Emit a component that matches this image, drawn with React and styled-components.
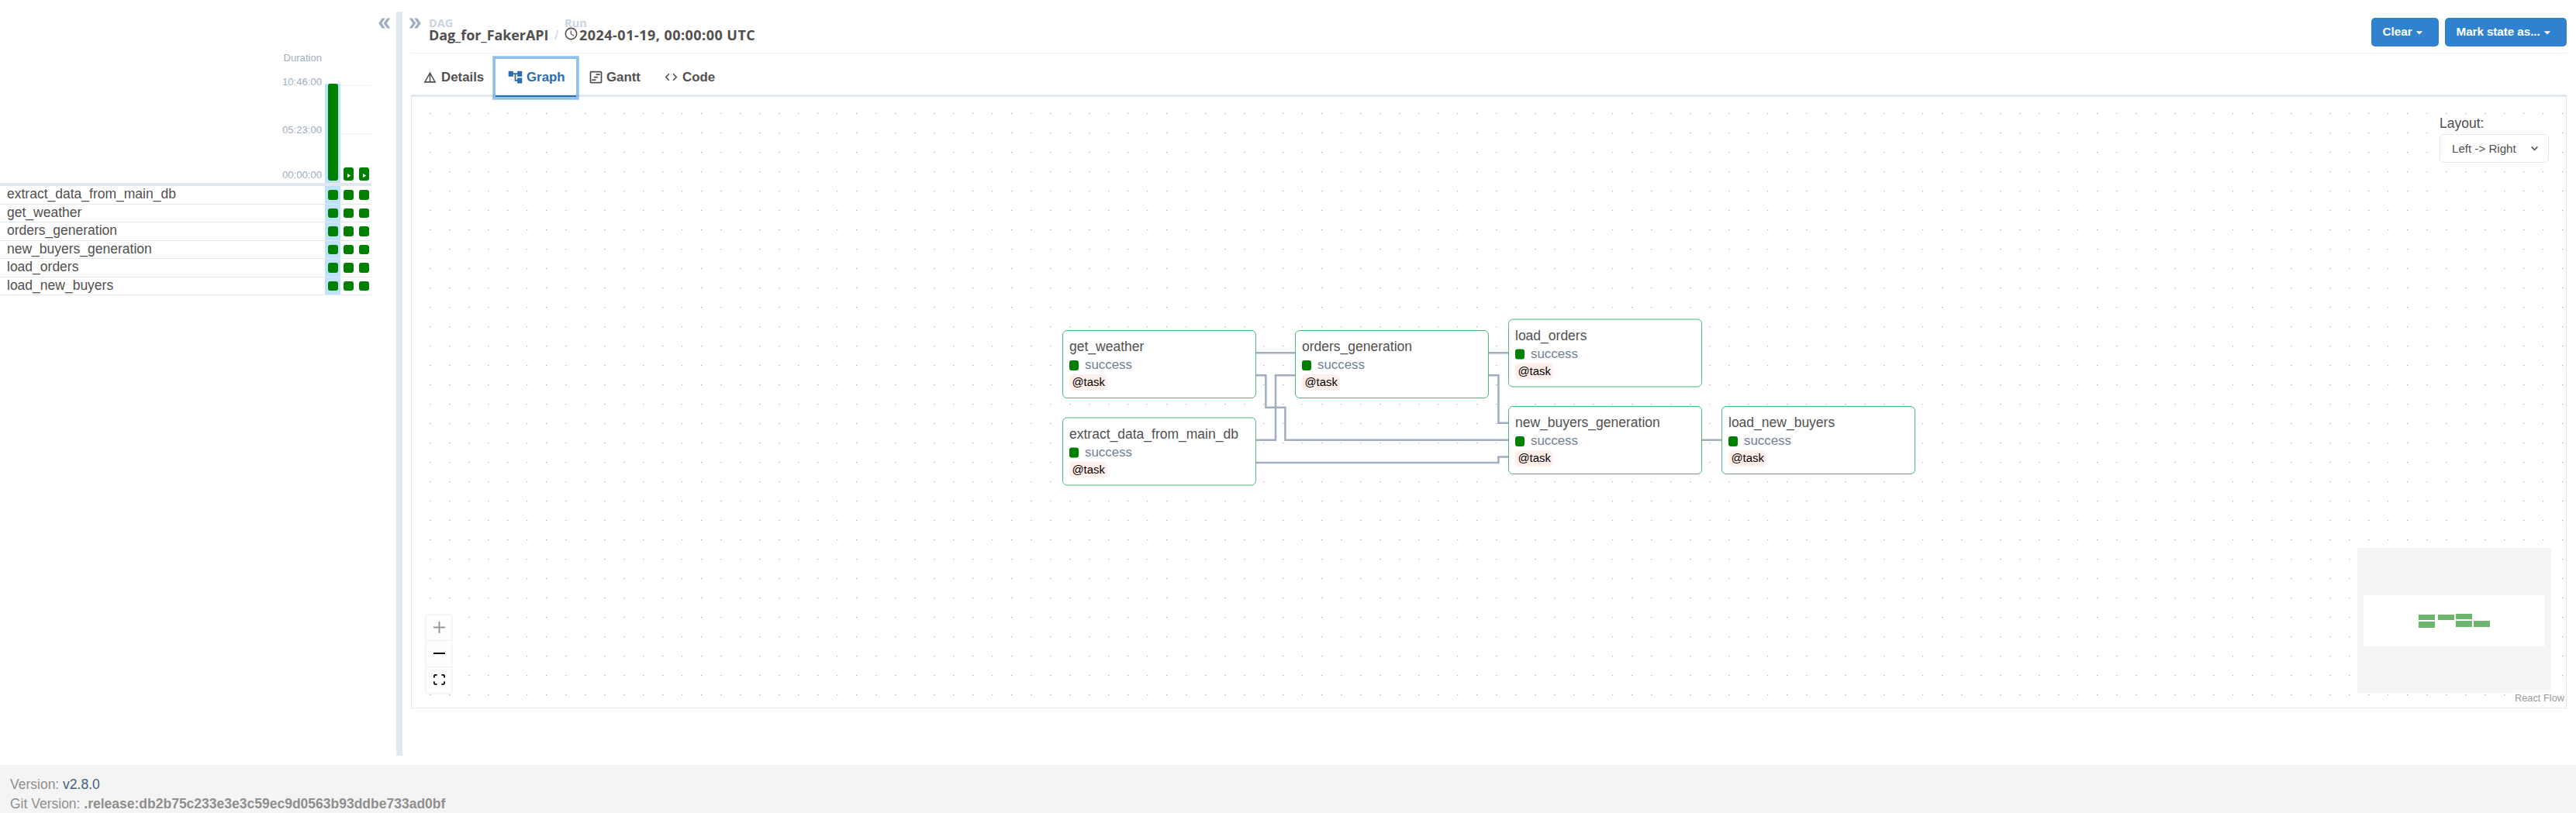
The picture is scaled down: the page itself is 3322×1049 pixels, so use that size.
import React from "react";
import styled, { createGlobalStyle } from "styled-components";
import { MdDoubleArrow, MdDetails, MdAccountTree, MdOutlineViewTimeline, MdCode, MdOutlineSchedule, MdPlayArrow, MdArrowDropDown } from "react-icons/md";

const SANS = '"Liberation Sans", Arial, sans-serif';
const HUMANIST = '"Open Sans", "Noto Sans", sans-serif';

const Global = createGlobalStyle`
  *, *::before, *::after { box-sizing: border-box; }
  body { margin: 0; background: #fff; color: #51504f; font-family: ${SANS}; font-size: 17.5px; }
  button { font-family: inherit; border: 0; background: none; padding: 0; color: inherit; }
`;

const Page = styled.div`
  display: flex;
  flex-direction: column;
  width: 100%;
  height: 1049px;
  overflow: hidden;
`;

const Main = styled.main`
  display: flex;
  height: 987px;
  padding: 15px 12px 12px 0;
`;

const Side = styled.section`
  display: flex;
  flex-direction: column;
  width: 511px;
`;

const Divider = styled.div`
  width: 8px;
  background: #e2e8f0;
`;

const Toggle = styled.button`
  display: flex;
  color: #a0aec0;
  svg { width: 22px; height: 22px; transform: ${(p) => (p.$flip ? "rotate(180deg)" : "none")}; }
`;

const SideTop = styled.div`
  display: flex;
  justify-content: flex-end;
  height: 48px;
  padding: 4px 4px 0 0;
`;

const Chart = styled.div`
  display: flex;
  width: 479px;
  height: 177px;
  border-bottom: 4px solid #e2e8f0;
`;

const Scale = styled.div`
  display: flex;
  flex-direction: column;
  align-items: flex-end;
  width: 415px;
  margin-right: 4px;
  font-size: 13.1px;
  line-height: 16px;
  color: #a0aec0;
`;

const ScaleLabel = styled.span`
  margin-top: ${(p) => p.$gap}px;
`;

const Plot = styled.div`
  display: flex;
  align-items: flex-end;
  width: 60px;
  height: 128px;
  margin-top: 45px;
  background:
    linear-gradient(#edf2f7, #edf2f7) 0 2px / 100% 1px no-repeat,
    linear-gradient(#edf2f7, #edf2f7) 0 64px / 100% 1px no-repeat,
    linear-gradient(#edf2f7, #edf2f7) 0 122px / 100% 1px no-repeat;
`;

const RunColumn = styled.div`
  display: flex;
  align-items: flex-end;
  width: 20px;
  height: 128px;
  padding: 0 3px 3px 4px;
  background: ${(p) => (p.$active ? "#bee3f8" : "transparent")};
`;

const RunBar = styled.div`
  display: flex;
  align-items: flex-end;
  justify-content: center;
  width: 13px;
  height: ${(p) => p.$height}px;
  padding-bottom: 2px;
  border-radius: 3px;
  background: #008000;
  color: #fff;
  svg { width: 9px; height: 9px; }
`;

const TaskRow = styled.div`
  display: flex;
  align-items: center;
  width: 479px;
  height: 23.5px;
  border-bottom: 1px solid #e2e8f0;
`;

const TaskName = styled.span`
  width: 419px;
  padding: 0 0 1.5px 9px;
  line-height: 21px;
`;

const TaskCell = styled.div`
  display: flex;
  align-items: center;
  width: 20px;
  height: 100%;
  padding-left: 4px;
  background: ${(p) => (p.$active ? "#bee3f8" : "transparent")};
`;

const StateSquare = styled.div`
  width: ${(p) => p.$w}px;
  height: ${(p) => p.$h}px;
  border-radius: 3px;
  background: #008000;
`;

const Content = styled.section`
  display: flex;
  flex-direction: column;
  flex: 1;
  padding-left: 11px;
`;

const Header = styled.header`
  display: flex;
  height: 54px;
  border-bottom: 1px solid #edf2f7;
`;

const ToggleSlot = styled.div`
  width: 23px;
  margin: 4px 0 0 -6px;
`;

const Crumb = styled.div`
  display: flex;
  flex-direction: column;
  margin-left: ${(p) => p.$gap}px;
  padding-top: 4px;
  font-family: ${HUMANIST};
  font-weight: 700;
  white-space: nowrap;
`;

const CrumbLabel = styled.span`
  height: 15px;
  font-size: 14.6px;
  line-height: 20px;
  color: #cbd5e0;
`;

const CrumbValue = styled.span`
  display: flex;
  align-items: center;
  font-size: 18px;
  line-height: 22px;
  letter-spacing: ${(p) => p.$track}px;
  svg { width: 19px; height: 19px; margin: -4px 1px 0 -1px; }
`;

const Slash = styled.span`
  align-self: flex-start;
  width: 16px;
  padding: 21px 0 0 8px;
  font-size: 17px;
  color: #cbd5e0;
`;

const Actions = styled.div`
  display: flex;
  gap: 8px;
  margin: 8px 0 0 auto;
`;

const ActionButton = styled.button`
  display: flex;
  align-items: center;
  width: ${(p) => p.$width}px;
  height: 37px;
  padding: 0 0 2px 14.5px;
  border-radius: 5px;
  background: #3182ce;
  color: #fff;
  font-size: 15.3px;
  font-weight: 700;
  letter-spacing: ${(p) => p.$track || 0}px;
  white-space: nowrap;
  svg { width: 20px; height: 20px; margin: 2px 0 0 -1px; }
`;

const Tabs = styled.nav`
  display: flex;
  height: 56px;
  padding-top: 7px;
  border-bottom: 3px solid #e2e8f0;
`;

const Tab = styled.button`
  display: flex;
  align-items: center;
  gap: ${(p) => p.$gap}px;
  width: ${(p) => p.$width}px;
  height: 49px;
  padding: 0 0 0 15px;
  border-bottom: 2px solid ${(p) => (p.$active ? "#2b6cb0" : "transparent")};
  box-shadow: ${(p) => (p.$active ? "0 0 0 3.75px rgba(66, 153, 225, 0.6)" : "none")};
  color: ${(p) => (p.$active ? "#2b6cb0" : "inherit")};
  font-size: 16.85px;
  font-weight: 700;
  z-index: 1;
  svg { width: ${(p) => p.$icon || 21}px; height: ${(p) => p.$icon || 21}px; }
`;

const Canvas = styled.div`
  position: relative;
  width: 2780px;
  height: 789px;
  border: 1px solid #e2e8f0;
  border-top: 0;
`;

const Drawing = styled.svg`
  position: absolute;
  inset: 0;
`;

const Node = styled.div`
  position: absolute;
  left: ${(p) => p.$x - 531}px;
  top: ${(p) => Math.floor(p.$y) - 125}px;
  transform: ${(p) => (p.$y % 1 ? `translateY(${p.$y % 1}px)` : "none")};
  display: flex;
  flex-direction: column;
  align-items: flex-start;
  width: 250px;
  height: 88px;
  padding: 9px 8px;
  border: 1.25px solid #48bb78;
  border-radius: 6px;
  background: #fff;
  white-space: nowrap;
`;

const NodeTitle = styled.span`
  line-height: 22px;
`;

const NodeState = styled.span`
  display: flex;
  align-items: center;
  gap: 8px;
  height: 29px;
  padding-top: 1.5px;
  font-size: 16.9px;
  color: #718096;
`;

const Operator = styled.span`
  height: 21px;
  padding: 0 3.5px;
  border-radius: 6px;
  background: #ffefeb;
  color: #000;
  font-size: 14.9px;
  line-height: 21px;
`;

const LayoutPicker = styled.div`
  position: absolute;
  left: 2615px;
  top: 24px;
  width: 141px;
`;

const PickerLabel = styled.div`
  height: 24px;
  line-height: 20px;
  background: rgba(255, 255, 255, 0.8);
`;

const Picker = styled.div`
  display: flex;
  align-items: center;
  justify-content: space-between;
  height: 37px;
  padding: 0 9px 0 15px;
  border: 1px solid #e2e8f0;
  border-radius: 5px;
  background: rgba(255, 255, 255, 0.8);
  font-size: 15.1px;
`;

const Controls = styled.div`
  position: absolute;
  left: 19px;
  top: 668.5px;
  display: flex;
  flex-direction: column;
  width: 32px;
  box-shadow: 0 0 2.5px 1px rgba(0, 0, 0, 0.08);
`;

const Control = styled.button`
  display: flex;
  align-items: center;
  justify-content: center;
  height: 33.5px;
  border-bottom: 1px solid #eee;
  background: #fefefe;
  color: ${(p) => (p.$muted ? "rgba(0,0,0,0.4)" : "#000")};
  &:last-child { border-bottom: 0; }
`;

const MiniMap = styled.svg`
  position: absolute;
  left: 2509px;
  top: 582px;
  background: #fff;
`;

const Attribution = styled.span`
  position: absolute;
  right: 0;
  bottom: 0;
  width: 70px;
  height: 23px;
  padding-left: 4px;
  background: rgba(255, 255, 255, 0.5);
  color: #999;
  font-size: 12.8px;
  line-height: 21px;
`;

const Footer = styled.footer`
  height: 62px;
  padding: 13px;
  background: #f4f4f4;
  color: #908f8e;
  line-height: 25px;
`;

const Version = styled.span`
  color: #44607c;
`;

const tasks = ["extract_data_from_main_db", "get_weather", "orders_generation", "new_buyers_generation", "load_orders", "load_new_buyers"];

const nodes = [
  { id: "get_weather", x: 1370, y: 426 },
  { id: "extract_data_from_main_db", x: 1370, y: 538.5 },
  { id: "orders_generation", x: 1670, y: 426 },
  { id: "load_orders", x: 1945, y: 411.5 },
  { id: "new_buyers_generation", x: 1945, y: 524 },
  { id: "load_new_buyers", x: 2220, y: 524 },
];

const edges = [
  "M1620 455.3H1670",
  "M1620 484.3H1632.4V525.8H1657.4V567.7H1945",
  "M1620 567.7H1645V484.3H1670",
  "M1620 597H1932.4V589.6H1945",
  "M1920 455.3H1945",
  "M1920 484.3H1932.4V545.7H1945",
  "M2195 567.7H2220",
];

const miniNodes = [[79, 86, 7], [104, 86, 7], [127, 85, 7], [79, 95, 8], [127, 94, 8], [150, 94, 8]];

export default function App() {
  return (
    <Page>
      <Global />
      <Main>
        <Side>
          <SideTop>
            <Toggle $flip><MdDoubleArrow /></Toggle>
          </SideTop>
          <Chart>
            <Scale>
              <ScaleLabel $gap={4}>Duration</ScaleLabel>
              <ScaleLabel $gap={15}>10:46:00</ScaleLabel>
              <ScaleLabel $gap={46}>05:23:00</ScaleLabel>
              <ScaleLabel $gap={42}>00:00:00</ScaleLabel>
            </Scale>
            <Plot>
              <RunColumn $active><RunBar $height={125} /></RunColumn>
              <RunColumn><RunBar $height={17}><MdPlayArrow /></RunBar></RunColumn>
              <RunColumn><RunBar $height={17}><MdPlayArrow /></RunBar></RunColumn>
            </Plot>
          </Chart>
          {tasks.map((t) => (
            <TaskRow key={t}>
              <TaskName>{t}</TaskName>
              {[0, 1, 2].map((i) => (
                <TaskCell key={i} $active={i === 0}><StateSquare $w={13} $h={12.5} /></TaskCell>
              ))}
            </TaskRow>
          ))}
        </Side>
        <Divider />
        <Content>
          <Header>
            <ToggleSlot><Toggle><MdDoubleArrow /></Toggle></ToggleSlot>
            <Crumb $gap={6}>
              <CrumbLabel>DAG</CrumbLabel>
              <CrumbValue $track={-0.1}>Dag_for_FakerAPI</CrumbValue>
            </Crumb>
            <Slash>/</Slash>
            <Crumb $gap={4.8}>
              <CrumbLabel>Run</CrumbLabel>
              <CrumbValue $track={0.47}><MdOutlineSchedule />2024-01-19, 00:00:00 UTC</CrumbValue>
            </Crumb>
            <Actions>
              <ActionButton $width={87}>Clear<MdArrowDropDown /></ActionButton>
              <ActionButton $width={157} $track={-0.1}>Mark state as...<MdArrowDropDown /></ActionButton>
            </Actions>
          </Header>
          <Tabs>
            <Tab $width={109} $icon={19} $gap={5}><MdDetails />Details</Tab>
            <Tab $width={104} $gap={4} $active><MdAccountTree />Graph</Tab>
            <Tab $width={98} $gap={3}><MdOutlineViewTimeline />Gantt</Tab>
            <Tab $width={97} $icon={19} $gap={5}><MdCode />Code</Tab>
          </Tabs>
          <Canvas>
            <Drawing width="2778" height="788" viewBox="531 125 2778 788">
              <defs>
                <pattern id="dots" x="554" y="146" width="25" height="25" patternUnits="userSpaceOnUse">
                  <circle cx="0.75" cy="0.6" r="0.63" fill="#91919a" />
                </pattern>
              </defs>
              <rect x="531" y="125" width="2778" height="788" fill="url(#dots)" />
              {edges.map((d) => (
                <path key={d} d={d} fill="none" stroke="#a0aec0" strokeWidth="2.5" />
              ))}
            </Drawing>
            {nodes.map((n) => (
              <Node key={n.id} $x={n.x} $y={n.y}>
                <NodeTitle>{n.id}</NodeTitle>
                <NodeState><StateSquare $w={12} $h={12.5} />success</NodeState>
                <Operator>@task</Operator>
              </Node>
            ))}
            <LayoutPicker>
              <PickerLabel>Layout:</PickerLabel>
              <Picker>
                Left -&gt; Right
                <svg width="17" height="17" viewBox="0 0 24 24">
                  <path d="M16.59 8.59L12 13.17 7.41 8.59 6 10l6 6 6-6z" fill="#51504f" stroke="#51504f" strokeWidth="0.5" />
                </svg>
              </Picker>
            </LayoutPicker>
            <Controls>
              <Control $muted>
                <svg width="15" height="15" viewBox="0 0 32 32"><path fill="currentColor" d="M32 18.133H18.133V32h-4.266V18.133H0v-4.266h13.867V0h4.266v13.867H32z" /></svg>
              </Control>
              <Control>
                <svg width="15" height="2" viewBox="0 0 15 2"><path fill="currentColor" d="M0 0h15v2H0z" /></svg>
              </Control>
              <Control>
                <svg width="15" height="14" viewBox="0 0 32 30"><path fill="currentColor" d="M3.692 4.63c0-.53.4-.938.939-.938h5.215V0H4.708C2.13 0 0 2.054 0 4.63v5.216h3.692V4.631zM27.354 0h-5.2v3.692h5.17c.53 0 .984.4.984.939v5.215H32V4.631A4.624 4.624 0 0027.354 0zm.954 24.83c0 .532-.4.94-.939.94h-5.215v3.768h5.215c2.577 0 4.631-2.13 4.631-4.707v-5.139h-3.692v5.139zm-23.677.94c-.531 0-.939-.4-.939-.94v-5.138H0v5.139c0 2.577 2.13 4.707 4.708 4.707h5.138V25.77H4.631z" /></svg>
              </Control>
            </Controls>
            <MiniMap width="250" height="187" viewBox="0 0 250 187">
              {miniNodes.map(([x, y, h]) => (
                <rect key={`${x}-${y}`} x={x} y={y} width="21" height={h} fill="#48a348" opacity="0.8" />
              ))}
              <path d="M0 0H250V187H0zM8 60.7V127H242V60.7z" fillRule="evenodd" fill="#f5f5f5" />
            </MiniMap>
            <Attribution>React Flow</Attribution>
          </Canvas>
        </Content>
      </Main>
      <Footer>
        <div>Version: <Version>v2.8.0</Version></div>
        <div>Git Version: <b>.release:db2b75c233e3e3c59ec9d0563b93ddbe733ad0bf</b></div>
      </Footer>
    </Page>
  );
}
